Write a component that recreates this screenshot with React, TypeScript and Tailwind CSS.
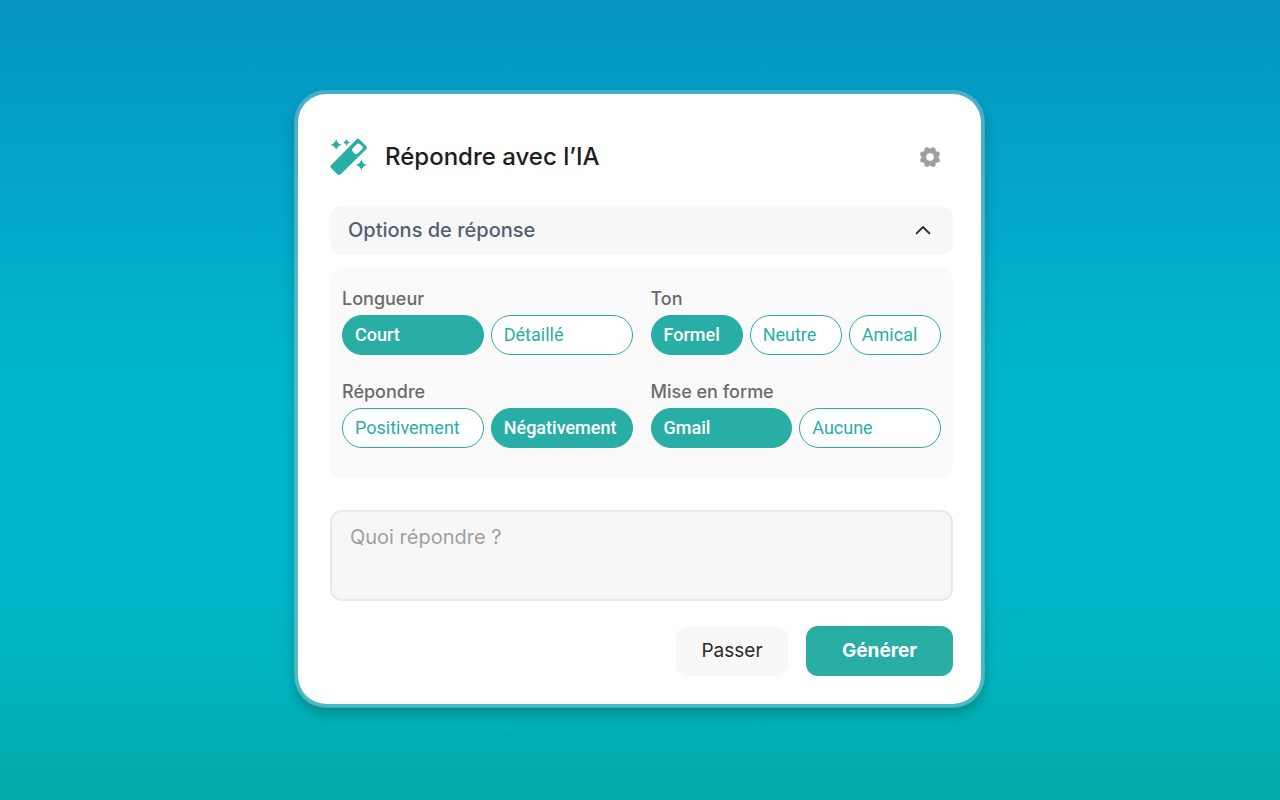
import { useState } from "react";
import clsx from "clsx";

type Group = { title: string; options: string[]; initial: string };

const GROUPS: Group[] = [
  { title: "Longueur", options: ["Court", "Détaillé"], initial: "Court" },
  { title: "Ton", options: ["Formel", "Neutre", "Amical"], initial: "Formel" },
  { title: "Répondre", options: ["Positivement", "Négativement"], initial: "Négativement" },
  { title: "Mise en forme", options: ["Gmail", "Aucune"], initial: "Gmail" },
];

function WandIcon() {
  return (
    <svg viewBox="0 0 38 38" className="size-[38px] text-[#29aea6]" fill="currentColor" aria-hidden="true">
      <path
        fillRule="evenodd"
        d="M26.2 1.7Q28 0 29.8 1.7L36.2 8.1Q37.7 9.8 36 11.5L10.7 36.2Q9 37.8 7.3 36.3L1 30Q-.2 28.6 1.2 27.1ZM26.8 6.2L22.7 10.3Q21.3 12 22.7 13.6L24.5 15.4Q26.1 16.8 27.7 15.4L32.2 10.9Q33.4 9.6 32.2 8.2L30.1 6.2Q28.4 5 26.8 6.2Z"
      />
      <path d="M6.2 1Q7 5.6 11.7 6.8Q7 8 6.2 12Q5.2 8 .4 6.8Q5.2 5.6 6.2 1Z" />
      <path d="M16.5 1Q17 4 19.8 4.6Q17 5.2 16.5 8Q16 5.2 13.2 4.6Q16 4 16.5 1Z" />
      <path d="M31.3 21.3Q32.2 26 36.8 27.1Q32.2 28.2 31.3 32.6Q30.3 28.2 25.8 27.1Q30.3 26 31.3 21.3Z" />
    </svg>
  );
}

function GearIcon() {
  return (
    <svg viewBox="0 0 20 20" className="size-5 text-[#9f9f9f]" aria-hidden="true">
      <g fill="currentColor">
        <circle cx="13" cy="2.8" r="2.6" />
        <circle cx="17.2" cy="7" r="2.6" />
        <circle cx="17.2" cy="13" r="2.6" />
        <circle cx="13" cy="17.2" r="2.6" />
        <circle cx="7" cy="17.2" r="2.6" />
        <circle cx="2.8" cy="13" r="2.6" />
        <circle cx="2.8" cy="7" r="2.6" />
        <circle cx="7" cy="2.8" r="2.6" />
      </g>
      <circle cx="10" cy="10" r="6.2" fill="none" stroke="currentColor" strokeWidth="4.8" />
    </svg>
  );
}

function ChevronUp() {
  return (
    <svg viewBox="0 0 16 10" className="h-[10px] w-4" fill="none" stroke="#2b2b2b" strokeWidth="1.9" aria-hidden="true">
      <path d="M1.6 8.4L8 2L14.4 8.4" strokeLinecap="round" strokeLinejoin="round" />
    </svg>
  );
}

function OptionGroup({ title, options, initial }: Group) {
  const [selected, setSelected] = useState(initial);
  return (
    <div role="group" aria-label={title}>
      <div className="text-[18px] leading-6 font-medium text-[#6b6b6b]">{title}</div>
      <div className="mt-1 flex gap-[7px]">
        {options.map((option) => (
          <button
            key={option}
            type="button"
            aria-pressed={option === selected}
            onClick={() => setSelected(option)}
            className={clsx(
              "h-10 min-w-0 flex-1 rounded-full border border-[#29aea6] px-3 text-left font-[Roboto,sans-serif] text-[18px] leading-6",
              option === selected ? "bg-[#29aea6] font-medium text-white" : "bg-white text-[#29aea6]",
            )}
          >
            {option}
          </button>
        ))}
      </div>
    </div>
  );
}

export default function App() {
  const [open, setOpen] = useState(true);
  return (
    <main className="flex min-h-screen items-center justify-center bg-[linear-gradient(to_bottom,#0694c4_0%,#02a6c7_24%,#00b4cb_43%,#00b6cd_55%,#00b6cd_70%,#00b3bf_84%,#00aaa5_100%)] pr-px pb-[3px] font-[Inter,sans-serif]">
      <section className="w-full max-w-[691px] rounded-[32px] border-4 border-[#d0d0d0]/35 bg-white bg-clip-padding pt-9 pr-7 pb-7 pl-8 shadow-[0_6px_12px_rgba(0,0,0,0.2)]">
        <header className="flex items-center gap-[17px] py-2 pr-[13px]">
          <WandIcon />
          <h1 className="flex-1 text-[24px] leading-[38px] font-medium text-[#1e1e1e]">Répondre avec l’IA</h1>
          <button type="button" aria-label="Paramètres">
            <GearIcon />
          </button>
        </header>

        <button
          type="button"
          aria-expanded={open}
          onClick={() => setOpen(!open)}
          className="mt-[22px] flex h-[49px] w-full items-center justify-between rounded-xl bg-[#f7f7f7] pr-[22px] pl-[18px] text-[20px] font-medium text-[#525f73]"
        >
          Options de réponse
          <ChevronUp />
        </button>

        {open && (
          <div className="mt-[13px] grid grid-cols-2 gap-x-[18px] gap-y-[25px] rounded-xl bg-[#fafafa] px-3 pt-[19px] pb-[30px]">
            {GROUPS.map((group) => (
              <OptionGroup key={group.title} {...group} />
            ))}
          </div>
        )}

        <textarea
          aria-label="Quoi répondre ?"
          placeholder="Quoi répondre ?"
          className="mt-8 block h-[91px] w-full resize-none rounded-xl border-2 border-[#e9e9e9] bg-[#f7f7f7] px-[18px] py-[11px] text-[20px] leading-7 text-[#1e1e1e] placeholder:text-[#a0a0a0]"
        />

        <div className="mt-[25px] flex justify-end gap-[18px] text-[19px]">
          <button type="button" className="h-[50px] w-28 rounded-xl bg-[#f8f8f8] pt-0.5 text-[#2b2b2b]">
            Passer
          </button>
          <button type="button" className="h-[50px] w-[147px] rounded-xl bg-[#29aea6] pt-0.5 font-bold text-white">
            Générer
          </button>
        </div>
      </section>
    </main>
  );
}
